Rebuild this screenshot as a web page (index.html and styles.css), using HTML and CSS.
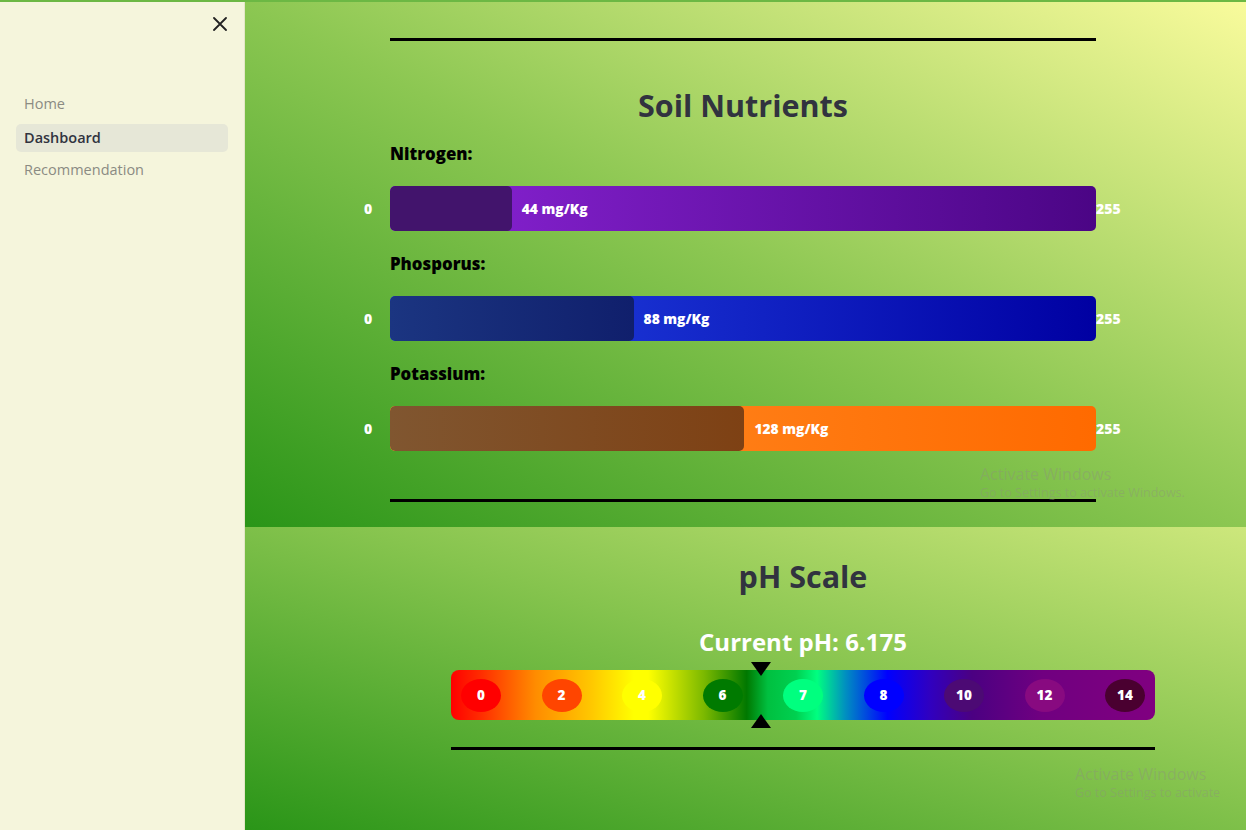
FILE: index.html
```
<!DOCTYPE html>
<html>
<head>
<meta charset="utf-8">
<link rel="stylesheet" href="styles.css">
</head>
<body>
<div class="app">
  <aside class="sidebar">
    <div class="close-row">
      <svg class="close-icon" width="14" height="14" viewBox="0 0 14 14"><path d="M1 1L13 13M13 1L1 13" stroke="#222" stroke-width="1.8" stroke-linecap="round"/></svg>
    </div>
    <nav class="nav">
      <div class="nav-item">Home</div>
      <div class="nav-item active">Dashboard</div>
      <div class="nav-item">Recommendation</div>
    </nav>
  </aside>
  <main class="main">
    <section class="nutrients">
      <div class="rule"></div>
      <h1 class="title">Soil Nutrients</h1>
      <div class="label">Nitrogen:</div>
      <div class="bar-row">
        <span class="end zero">0</span>
        <div class="track track-n">
          <div class="fill fill-n" style="width:17.25%"></div>
          <span class="value">44 mg/Kg</span>
        </div>
        <span class="end max">255</span>
      </div>
      <div class="label">Phosporus:</div>
      <div class="bar-row">
        <span class="end zero">0</span>
        <div class="track track-p">
          <div class="fill fill-p" style="width:34.5%"></div>
          <span class="value">88 mg/Kg</span>
        </div>
        <span class="end max">255</span>
      </div>
      <div class="label">Potassium:</div>
      <div class="bar-row">
        <span class="end zero">0</span>
        <div class="track track-k">
          <div class="fill fill-k" style="width:50.2%"></div>
          <span class="value">128 mg/Kg</span>
        </div>
        <span class="end max">255</span>
      </div>
      <div class="rule rule-bottom"></div>
      <div class="watermark wm1"><div class="wm-title">Activate Windows</div><div class="wm-sub">Go to Settings to activate Windows.</div></div>
    </section>
    <section class="ph">
      <h2 class="title ph-title">pH Scale</h2>
      <div class="current">Current pH: 6.175</div>
      <div class="ph-bar">
        <div class="dot d0">0</div>
        <div class="dot d2">2</div>
        <div class="dot d4">4</div>
        <div class="dot d6">6</div>
        <div class="dot d7">7</div>
        <div class="dot d8">8</div>
        <div class="dot d10">10</div>
        <div class="dot d12">12</div>
        <div class="dot d14">14</div>
        <div class="marker marker-top" style="left:44.1%"></div>
        <div class="marker marker-bottom" style="left:44.1%"></div>
      </div>
      <div class="rule ph-rule"></div>
      <div class="watermark wm2"><div class="wm-title">Activate Windows</div><div class="wm-sub">Go to Settings to activate</div></div>
    </section>
  </main>
</div>
</body>
</html>
```
FILE: styles.css
```
* { box-sizing: border-box; }
html, body { margin: 0; padding: 0; }
body {
  width: 1246px;
  height: 830px;
  overflow: hidden;
  font-family: "Open Sans", "Noto Sans", sans-serif;
  background: #6cb844;
}
.app {
  display: flex;
  height: 830px;
  border-top: 2px solid #6cb844;
}
.sidebar {
  width: 245px;
  flex: none;
  background: #f5f5dc;
  border-right: 1px solid #e4e6c8;
  padding: 0 16px;
}
.close-row {
  display: flex;
  justify-content: flex-end;
  padding: 15px 1px 0 0;
  height: 31px;
}
.nav {
  margin-top: 57px;
  display: flex;
  flex-direction: column;
}
.nav-item {
  height: 32px;
  line-height: 28px;
  padding-left: 8px;
  font-size: 14.5px;
  color: #8b8b83;
  border-radius: 5px;
}
.nav-item:first-child { height: 34px; }
.nav-item.active {
  background: #e6e7d7;
  color: #31333f;
  font-weight: 600;
  height: 28px;
  margin-bottom: 4px;
}
.main {
  flex: 1;
  display: flex;
  flex-direction: column;
}
.nutrients {
  position: relative;
  height: 525px;
  background: linear-gradient(to top right, #2a9518 0%, #8cc752 50%, #f9fb9c 100%);
  padding: 36px 0 0 110px;
}
.rule {
  width: 706px;
  height: 3px;
  background: #000;
  margin-left: 35px;
}
.title {
  margin: 44px 0 0 35px;
  width: 706px;
  text-align: center;
  font-size: 30.5px;
  line-height: 40px;
  font-weight: 700;
  color: #31333f;
}
.label {
  margin: 17px 0 0 35px;
  font-size: 16.8px;
  line-height: 24px;
  font-weight: 800;
  color: #000;
}
.bar-row {
  display: flex;
  align-items: center;
  margin-top: 20px;
  height: 45px;
}
.bar-row + .label { margin-top: 21px; }
.end {
  font-size: 14px;
  font-weight: 800;
  color: #fff;
}
.zero {
  width: 35px;
  padding-left: 9px;
}
.max { padding-left: 0; }
.track {
  position: relative;
  width: 706px;
  height: 45px;
  border-radius: 5px;
  overflow: hidden;
  display: flex;
  align-items: center;
}
.track-n { background: linear-gradient(to right, #8a24d6, #4b0585); }
.track-p { background: linear-gradient(to right, #2448e8, #0000a2); }
.track-k { background: linear-gradient(to right, #ff8f28, #ff6a00); }
.fill {
  height: 100%;
  border-radius: 5px;
  flex: none;
}
.fill-n { background: #42146c; }
.fill-p { background: linear-gradient(to right, #1b3581, #101f6c); }
.fill-k { background: linear-gradient(to right, #805630, #7e4114); }
.value {
  padding-left: 10px;
  font-size: 13.8px;
  font-weight: 800;
  color: #fff;
}
.rule-bottom { margin-top: 48px; }
.ph {
  position: relative;
  flex: 1;
  background: linear-gradient(to top right, #2a9518 0%, #86c44e 55%, #cde77c 100%);
  padding: 29px 0 0 206px;
}
.ph-title {
  margin: 0;
  width: 704px;
}
.current {
  width: 704px;
  margin-top: 30px;
  text-align: center;
  font-size: 24px;
  line-height: 32px;
  font-weight: 700;
  color: #fff;
}
.ph-bar {
  position: relative;
  width: 704px;
  height: 50px;
  margin-top: 12px;
  border-radius: 8px;
  background: linear-gradient(to right, #ff0000 0%, #ff2a00 4%, #ff8c00 12%, #ffc800 20%, #ffff00 26%, #ffff00 28%, #7ab800 36%, #007800 42%, #00c040 45%, #00d050 49%, #00ff80 52%, #0090c0 56%, #0000ff 62%, #3000c0 68%, #4b0082 74%, #700080 84%, #800080 100%);
  display: flex;
  align-items: center;
  justify-content: space-between;
  padding: 0 10px;
}
.dot {
  width: 40px;
  height: 33px;
  border-radius: 50%;
  display: flex;
  align-items: center;
  justify-content: center;
  font-size: 13.5px;
  font-weight: 800;
  color: #fff;
}
.d0 { background: #ff0000; }
.d2 { background: #ff4500; }
.d4 { background: #ffff00; }
.d6 { background: #007a00; }
.d7 { background: #00ff7f; }
.d8 { background: #0000ff; }
.d10 { background: #4c0a74; }
.d12 { background: #880a80; }
.d14 { background: #4a0030; }
.marker {
  position: absolute;
  width: 0;
  height: 0;
  margin-left: -10px;
  border-left: 10px solid transparent;
  border-right: 10px solid transparent;
}
.marker-top {
  top: -8px;
  border-top: 14px solid #000;
}
.marker-bottom {
  bottom: -8px;
  border-bottom: 14px solid #000;
}
.ph-rule {
  width: 704px;
  margin: 27px 0 0 0;
}
.watermark {
  position: absolute;
  font-family: "Open Sans", sans-serif;
  color: rgba(140, 150, 120, 0.45);
  white-space: nowrap;
}
.wm-title { font-size: 16px; line-height: 20px; }
.wm-sub { font-size: 12.5px; line-height: 18px; }
.wm1 { left: 735px; top: 462px; }
.wm2 { left: 830px; top: 237px; }
```
